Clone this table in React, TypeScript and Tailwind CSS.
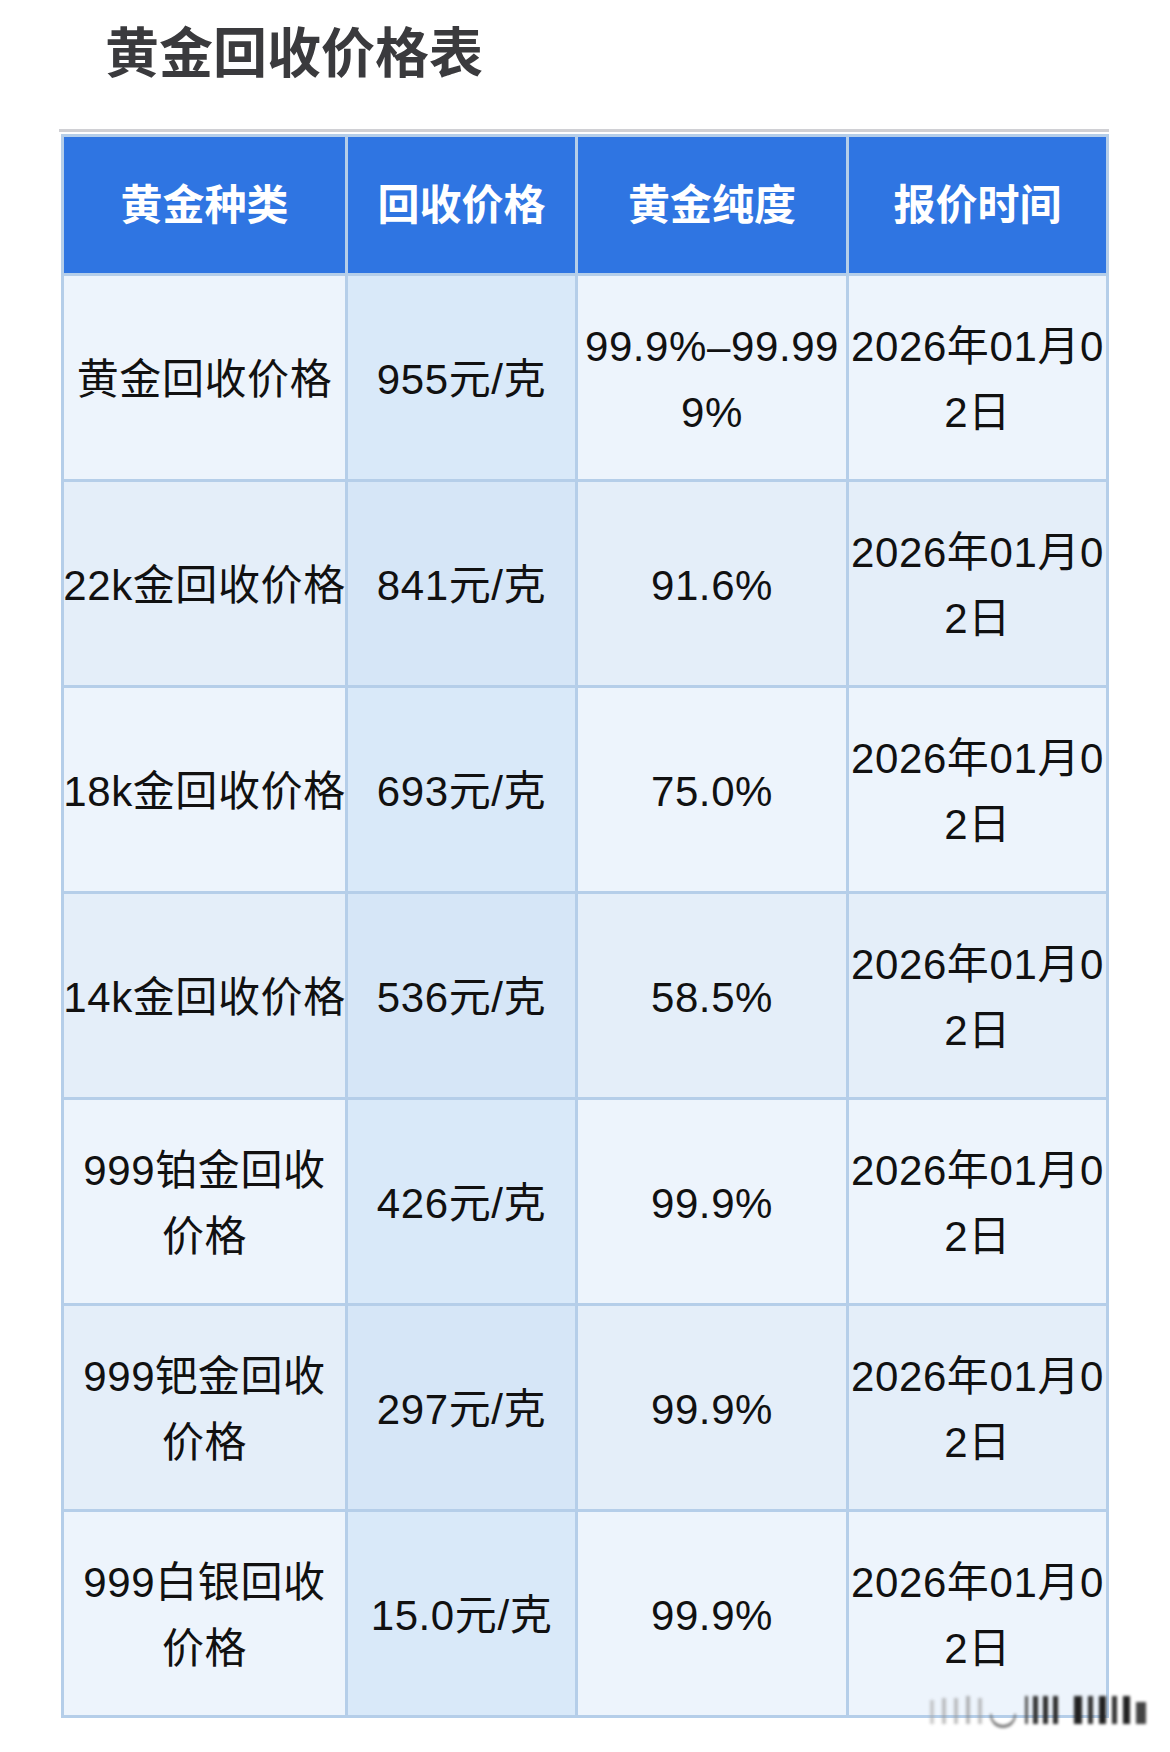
import React from "react";

type Row = { name: string[]; price: string; purity: string[] };

const rows: Row[] = [
  { name: ["黄金回收价格"], price: "955元/克", purity: ["99.9%–99.99", "9%"] },
  { name: ["22k金回收价格"], price: "841元/克", purity: ["91.6%"] },
  { name: ["18k金回收价格"], price: "693元/克", purity: ["75.0%"] },
  { name: ["14k金回收价格"], price: "536元/克", purity: ["58.5%"] },
  { name: ["999铂金回收", "价格"], price: "426元/克", purity: ["99.9%"] },
  { name: ["999钯金回收", "价格"], price: "297元/克", purity: ["99.9%"] },
  { name: ["999白银回收", "价格"], price: "15.0元/克", purity: ["99.9%"] },
];

const date = ["2026年01月0", "2日"];

function Lines({ lines }: { lines: string[] }) {
  return (
    <div className="flex flex-col items-center">
      {lines.map((l, i) => (
        <div key={i} className="whitespace-nowrap">
          {l}
        </div>
      ))}
    </div>
  );
}

function Cell({ lines, bg }: { lines: string[]; bg: string }) {
  return (
    <div
      className={`${bg} h-[203px] pt-[4px] flex items-center justify-center text-center text-[42px] leading-[66px] tracking-[0.6px] text-[#111111]`}
    >
      <Lines lines={lines} />
    </div>
  );
}

function Head({ text }: { text: string }) {
  return (
    <div className="bg-[#2f75e2] h-[136px] flex items-center justify-center text-[42px] font-bold text-white">
      {text}
    </div>
  );
}

export default function App() {
  return (
    <div className="w-[1170px] h-[1752px] bg-white relative overflow-hidden font-['Liberation_Sans','Noto_Sans_CJK_SC',sans-serif]">
      <h1 className="pl-[105px] pt-[23px] text-[54px] leading-none font-bold text-[#3a3a3d] font-['Noto_Sans_CJK_SC',sans-serif]">
        黄金回收价格表
      </h1>
      <div className="ml-[59px] mt-[52px] w-[1050px] h-[3px] bg-[#d0d0d4]" />
      <div className="ml-[61px] mt-[2px] w-[1048px] grid grid-cols-[281px_227px_268px_257px] gap-[3px] p-[3px] bg-[#b5cee9]">
        <Head text="黄金种类" />
        <Head text="回收价格" />
        <Head text="黄金纯度" />
        <Head text="报价时间" />
        {rows.map((r, i) => {
          const even = i % 2 === 0;
          const base = even ? "bg-[#edf4fc]" : "bg-[#e4eef9]";
          const price = even ? "bg-[#d9e9f9]" : "bg-[#d6e6f7]";
          return (
            <React.Fragment key={i}>
              <Cell lines={r.name} bg={base} />
              <Cell lines={[r.price]} bg={price} />
              <Cell lines={r.purity} bg={base} />
              <Cell lines={date} bg={base} />
            </React.Fragment>
          );
        })}
      </div>
      <div className="absolute left-[930px] top-[1696px] flex items-end blur-[1.5px]">
        <div className="flex items-end gap-[8px] opacity-60">
          <div className="w-[4px] h-[24px] bg-[#aaaaaa]" />
          <div className="w-[4px] h-[26px] bg-[#999999]" />
          <div className="w-[4px] h-[26px] bg-[#999999]" />
          <div className="w-[4px] h-[28px] bg-[#888888]" />
          <div className="w-[4px] h-[26px] bg-[#999999]" />
        </div>
        <div className="w-[26px] h-[14px] rounded-b-full border-b-[3px] border-x-[2px] border-[#777777] ml-[8px] mb-[-4px]" />
        <div className="flex items-end gap-[5px] ml-[9px]">
          <div className="w-[3px] h-[28px] bg-[#555555]" />
          <div className="w-[5px] h-[28px] bg-[#333333]" />
          <div className="w-[5px] h-[28px] bg-[#2a2a2a]" />
          <div className="w-[5px] h-[28px] bg-[#2a2a2a]" />
        </div>
        <div className="flex items-end gap-[6px] ml-[16px]">
          <div className="w-[8px] h-[28px] bg-[#222222]" />
          <div className="w-[5px] h-[28px] bg-[#333333]" />
          <div className="w-[7px] h-[28px] bg-[#222222]" />
          <div className="w-[5px] h-[28px] bg-[#333333]" />
          <div className="w-[7px] h-[28px] bg-[#222222]" />
          <div className="w-[10px] h-[22px] bg-[#444444]" />
        </div>
      </div>
    </div>
  );
}
